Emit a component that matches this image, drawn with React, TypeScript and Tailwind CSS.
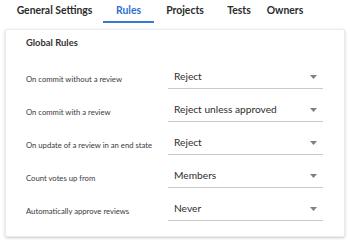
import { FC } from "react";

const tabs = [
  { label: "General Settings", w: "w-[97px]" },
  { label: "Rules", w: "w-[51px]", active: true },
  { label: "Projects", w: "w-[62px]" },
  { label: "Tests", w: "w-[46px]" },
  { label: "Owners", w: "w-[46px]" },
];

const rules = [
  { label: "On commit without a review", value: "Reject" },
  { label: "On commit with a review", value: "Reject unless approved" },
  { label: "On update of a review in an end state", value: "Reject" },
  { label: "Count votes up from", value: "Members" },
  { label: "Automatically approve reviews", value: "Never" },
];

const Arrow: FC = () => (
  <svg width="7" height="4" viewBox="0 0 7 4" className="mb-[4px]">
    <path d="M0 0h7L3.5 4z" fill="#808080" />
  </svg>
);

const App: FC = () => {
  return (
    <div
      className="w-[350px] h-[246px] bg-white overflow-hidden"
      style={{ fontFamily: "Lato, 'Open Sans', sans-serif" }}
    >
      <div className="flex pl-[6px] h-[23px]">
        {tabs.map((t) => (
          <div
            key={t.label}
            className={`${t.w} flex items-center justify-center text-[10.4px] font-bold h-[23px] pt-[1px] ${
              t.active
                ? "text-[#2f6fd0] border-b-2 border-[#3a78d4]"
                : "text-[#2b2b2b] border-b-2 border-transparent"
            }`}
          >
            <span>{t.label}</span>
          </div>
        ))}
      </div>

      <div className="mx-[5px] mt-[6px] bg-white rounded-[2px] border border-[#ececec] shadow-[0_1px_3px_rgba(0,0,0,0.22)] pl-[20px] pr-[21px] pt-[6px] pb-[15px]">
        <h2 className="text-[9.4px] leading-[14px] font-bold text-[#333]">
          Global Rules
        </h2>
        <div className="mt-[6px] flex flex-col">
          {rules.map((r) => (
            <div key={r.label} className="flex h-[33px]">
              <div className="w-[142px] flex items-end pb-[4px] text-[7.7px] leading-[12px] text-[#3a3a3a]">
                {r.label}
              </div>
              <div className="flex-1 flex items-end justify-between border-b border-[#c9c9c9] pl-[6px] pr-[6px] pb-[5px]">
                <span className="text-[10.2px] leading-[14px] text-[#2e2e2e]">
                  {r.value}
                </span>
                <Arrow />
              </div>
            </div>
          ))}
        </div>
      </div>
    </div>
  );
};

export default App;
